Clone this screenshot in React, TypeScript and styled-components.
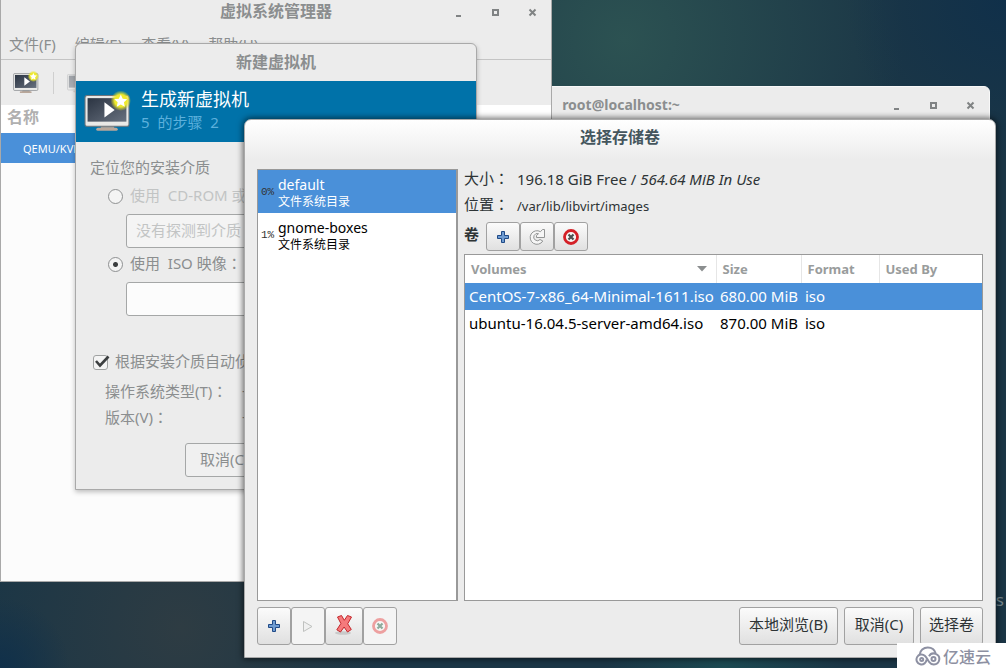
import React from 'react';
import styled, { createGlobalStyle, css } from 'styled-components';

const GlobalStyle = createGlobalStyle`
  * { box-sizing: border-box; }
  body {
    margin: 0;
    font-family: "Noto Sans", "Noto Sans CJK SC", sans-serif;
    font-size: 14px;
    color: #2e3436;
  }
  button, input, select { font: inherit; color: inherit; margin: 0; }
`;

const Desktop = styled.main`
  position: relative;
  min-height: 100vh;
  overflow: hidden;
  background:
    radial-gradient(circle at 0% 100%, #10304a 0, transparent 70px),
    radial-gradient(circle at 100% 0%, #10304a 0, transparent 160px),
    radial-gradient(circle at 62% 6%, #2c5252 0, transparent 280px),
    radial-gradient(circle at 72% 100%, #1c4a52 0, transparent 120px),
    radial-gradient(circle at 18% 94%, #2e3c43 0, transparent 200px),
    #1b3646;
`;

const windowFrame = css`
  position: absolute;
  display: flex;
  flex-direction: column;
  background: #ececec;
  border: 1px solid #a9a9a9;
`;

const ManagerWindow = styled.section`
  ${windowFrame}
  left: 0;
  top: -1px;
  width: 552px;
  height: 583px;
  color: #8b8e8f;
`;

const TerminalWindow = styled.section`
  ${windowFrame}
  left: 252px;
  top: 86px;
  width: 738px;
  height: 480px;
  border-color: #f8f8f8;
  border-radius: 6px 6px 0 0;
  color: #8b8e8f;
`;

const WizardWindow = styled.section`
  ${windowFrame}
  left: 75px;
  top: 43px;
  width: 402px;
  height: 447px;
  border-radius: 6px 6px 0 0;
  box-shadow: 0 2px 5px rgba(0, 0, 0, 0.25);
  color: #8b8e8f;
`;

const DialogWindow = styled.section`
  ${windowFrame}
  left: 244px;
  top: 119px;
  width: 752px;
  height: 539px;
  padding: 0 12px 12px;
  border-radius: 7px 7px 0 0;
  background: linear-gradient(#ffffff 0, #ececec 40px);
  box-shadow: 0 0 6px 1px rgba(0, 0, 0, 0.6);
`;

const TitleBar = styled.header<{ $height: number }>`
  display: grid;
  grid-template-columns: 1fr auto 1fr;
  align-items: center;
  flex: none;
  height: ${(p) => p.$height}px;
`;

const Title = styled.h1<{ $size?: number; $color?: string }>`
  grid-column: 2;
  margin: 0;
  padding-bottom: 2px;
  font-size: ${(p) => p.$size ?? 16}px;
  line-height: 20px;
  font-weight: 700;
  color: ${(p) => p.$color ?? 'inherit'};
`;

const WindowControls = styled.div`
  display: flex;
  justify-content: flex-end;
`;

const WindowControl = styled.button`
  width: 37px;
  height: 20px;
  padding: 0;
  border: 0;
  background: none;
  display: grid;
  place-items: center;
`;

const MenuBar = styled.nav`
  display: flex;
  gap: 19px;
  height: 36px;
  padding: 9px 8px 0;
  border-bottom: 1px solid #c4c4c4;
  font-size: 15px;
  line-height: 22px;
`;

const MenuItem = styled.button`
  height: 22px;
  padding: 0;
  border: 0;
  background: none;
  line-height: 22px;
  white-space: nowrap;
`;

const Toolbar = styled.div`
  display: flex;
  align-items: center;
  height: 45px;
  padding: 0 10px;
`;

const ToolbarButton = styled.button`
  width: 30px;
  height: 30px;
  padding: 0;
  border: 0;
  background: none;
  display: grid;
  place-items: center;
`;

const ToolbarSeparator = styled.span`
  width: 1px;
  height: 22px;
  margin: 0 10px 0 12px;
  background: #cfcfcf;
`;

const MachineTable = styled.table`
  width: 100%;
  border-collapse: collapse;
  background: #fcfcfc;

  th {
    height: 28px;
    padding: 0 6px 5px;
    text-align: left;
    font-size: 16px;
    line-height: 20px;
    color: #b0b0b0;
    background: #fff;
  }
  td {
    height: 30px;
    padding: 0 22px;
    font-size: 11px;
    color: #fff;
    background: #4a90d9;
  }
`;

const MachineArea = styled.div`
  flex: 1;
  background: #fcfcfc;
`;

const Banner = styled.div`
  display: flex;
  align-items: center;
  gap: 10px;
  height: 61px;
  padding: 0 8px;
  background: #0072a9;
`;

const BannerText = styled.div`
  padding-bottom: 6px;
`;

const BannerTitle = styled.h2`
  margin: 0;
  font-size: 18px;
  line-height: 26px;
  font-weight: 400;
  color: #fff;
`;

const BannerStep = styled.p`
  margin: 0;
  font-size: 15px;
  line-height: 20px;
  white-space: pre;
  color: #5cb0dc;
`;

const WizardBody = styled.form`
  flex: 1;
  display: flex;
  flex-direction: column;
  padding: 14px 14px 12px;
  font-size: 15px;
  line-height: 22px;
  white-space: nowrap;
`;

const ChoiceLabel = styled.label<{ $disabled?: boolean }>`
  display: flex;
  align-items: center;
  gap: 7px;
  height: 22px;
  white-space: pre;
  color: ${(p) => (p.$disabled ? '#c2c4c4' : 'inherit')};
`;

const ChoiceText = styled.span`
  padding-bottom: 2px;
`;

const Colon = styled.span`
  font-family: "Noto Sans CJK TC", sans-serif;
`;

const Choices = styled.div`
  display: flex;
  flex-direction: column;
  padding: 7px 0 0 18px;
`;

const Radio = styled.input`
  appearance: none;
  width: 15px;
  height: 15px;
  border: 1px solid #8f9192;
  border-radius: 50%;
  background: #f4f4f4;
  &:checked {
    background: radial-gradient(circle, #3c3f40 0 2px, #f4f4f4 3px);
  }
`;

const Entry = styled.input`
  height: 34px;
  margin: 7px 0 5px 18px;
  padding: 0 9px 2px;
  border: 1px solid #a5a7a7;
  border-radius: 3px;
  background: #fcfcfc;
  &:disabled { background: #f4f4f4; }
  &::placeholder { color: #c2c4c4; opacity: 1; }
`;

const CheckBox = styled.span`
  position: relative;
  display: grid;
  width: 15px;
  height: 15px;
  input {
    appearance: none;
    width: 15px;
    height: 15px;
    border: 1px solid #a0a2a2;
    border-radius: 3px;
    background: #f4f4f4;
  }
  svg { position: absolute; left: 0; top: -1px; }
`;

const DetectOption = styled.div`
  padding: 30px 0 5px 3px;
`;

const OsFields = styled.dl`
  display: grid;
  grid-template-columns: 137px 1fr;
  margin: 0;
  padding-left: 15px;
  line-height: 25px;
  dt, dd { margin: 0; }
`;

const WizardActions = styled.div`
  display: flex;
  gap: 6px;
  margin-top: auto;
  padding-left: 95px;
`;

const WizardButton = styled.button`
  height: 34px;
  flex: 1;
  padding: 0 14px 2px;
  text-align: left;
  border: 1px solid #a5a7a7;
  border-radius: 3px;
  background: #f0f0f0;
`;

const DialogHeading = styled.div`
  height: 49px;
  padding-top: 6px;
`;

const DialogBody = styled.div`
  display: flex;
  gap: 6px;
  flex: 1;
  min-height: 0;
`;

const PoolList = styled.ul`
  flex: none;
  width: 201px;
  margin: 0;
  padding: 0;
  list-style: none;
  background: #fff;
  border: 1px solid #999;
  border-right-width: 2px;
`;

const PoolItem = styled.li<{ $selected?: boolean }>`
  display: flex;
  align-items: center;
  gap: 4px;
  height: 43px;
  padding-left: 3px;
  color: ${(p) => (p.$selected ? '#fff' : '#000')};
  background: ${(p) => (p.$selected ? '#4a90d9' : 'transparent')};
`;

const PoolUsage = styled.span`
  width: 13px;
  font-family: "Liberation Mono", monospace;
  font-size: 11px;
  color: #333;
`;

const PoolName = styled.div`
  padding-top: 2px;
  font-size: 14px;
  line-height: 18px;
`;

const PoolType = styled.div`
  font-size: 12px;
  line-height: 16px;
`;

const VolumePane = styled.div`
  flex: 1;
  display: flex;
  flex-direction: column;
  gap: 3px;
  min-width: 0;
`;

const PoolInfo = styled.dl`
  display: grid;
  grid-template-columns: 53px 1fr;
  row-gap: 2px;
  margin: 0;
  font-size: 15px;
  line-height: 20px;
  dt { line-height: 18px; white-space: nowrap; }
  dd { height: 24px; margin: 0; }
`;

const PoolPath = styled.span`
  font-size: 13px;
`;

const VolumeTools = styled.div`
  display: flex;
  align-items: center;
  height: 29px;
`;

const VolumeLabel = styled.strong`
  width: 22px;
  padding-bottom: 5px;
  font-size: 15px;
  line-height: 20px;
`;

const IconButton = styled.button<{ $width?: number; $height: number }>`
  width: ${(p) => p.$width ?? 34}px;
  height: ${(p) => p.$height}px;
  padding: 0;
  display: grid;
  place-items: center;
  border: 1px solid #a1a1a1;
  border-radius: 3px;
  background: linear-gradient(#fbfbfb, #e0e0e0);
  &:disabled { background: #f4f4f4; }
`;

const TableFrame = styled.div`
  flex: 1;
  background: #fff;
  border: 1px solid #999;
`;

const VolumeTable = styled.table`
  width: 100%;
  table-layout: fixed;
  border-collapse: collapse;
  white-space: nowrap;

  th {
    height: 28px;
    padding: 0 6px;
    text-align: left;
    font-size: 13px;
    color: #999c9c;
    border-right: 1px solid #e6e6e6;
  }
  th:last-child { border-right: 0; }
  td { height: 27px; padding: 0 4px 2px; font-size: 15px; line-height: 20px; }
`;

const VolumeRow = styled.tr<{ $selected?: boolean }>`
  color: ${(p) => (p.$selected ? '#fff' : '#000')};
  background: ${(p) => (p.$selected ? '#4a90d9' : 'transparent')};
`;

const SortHeading = styled.span`
  display: flex;
  align-items: center;
  justify-content: space-between;
  padding-right: 3px;
`;

const DialogFooter = styled.footer`
  display: flex;
  justify-content: space-between;
  padding-top: 6px;
`;

const ButtonGroup = styled.div<{ $gap?: number }>`
  display: flex;
  gap: ${(p) => p.$gap ?? 0}px;
`;

const ActionButton = styled.button<{ $width: number }>`
  width: ${(p) => p.$width}px;
  height: 38px;
  padding: 0 0 5px;
  font-size: 15px;
  white-space: nowrap;
  border: 1px solid #a1a1a1;
  border-radius: 3px;
  background: linear-gradient(#fbfbfb, #e0e0e0);
`;

const DesktopText = styled.span`
  position: absolute;
  right: 2px;
  bottom: 57px;
  font-size: 17px;
  line-height: 22px;
  color: #76868e;
`;

const Watermark = styled.div`
  position: absolute;
  right: 0;
  bottom: 0;
  display: flex;
  align-items: center;
  gap: 2px;
  height: 25px;
  padding: 0 15px 0 18px;
  font-size: 16px;
  font-weight: 500;
  color: #8d90a2;
  background: #fff;
`;

const Controls = () => (
  <WindowControls>
    <WindowControl aria-label="最小化">
      <svg width="9" height="9"><path d="M2 7h5v2H2z" fill="#808384" /></svg>
    </WindowControl>
    <WindowControl aria-label="最大化">
      <svg width="9" height="9"><rect x="2" y="2" width="5" height="5" fill="none" stroke="#808384" strokeWidth="2" /></svg>
    </WindowControl>
    <WindowControl aria-label="关闭">
      <svg width="9" height="9"><path d="M1.5 1.5l6 6M7.5 1.5l-6 6" stroke="#808384" strokeWidth="2" /></svg>
    </WindowControl>
  </WindowControls>
);

const MonitorIcon = ({ width, id, dim }: { width: number; id: string; dim?: boolean }) => (
  <svg width={width} height={(width * 40) / 46} viewBox="0 0 46 40" opacity={dim ? 0.4 : 1}>
    <defs>
      <linearGradient id={`${id}-screen`} x1="0" y1="0" x2="1" y2="1">
        <stop offset="0" stopColor="#2b3442" />
        <stop offset="1" stopColor="#68717f" />
      </linearGradient>
      <radialGradient id={`${id}-glow`}>
        <stop offset="0.6" stopColor="#efea2c" />
        <stop offset="1" stopColor="#e6e61a" stopOpacity="0" />
      </radialGradient>
    </defs>
    <path d="M17 34h12l1 3H16z" fill="#9a9c9b" />
    <rect x="12" y="36" width="21" height="3" rx="1.5" fill="#b9a79a" />
    <rect x="1" y="4.5" width="43" height="30" rx="2" fill="#e9e9e7" stroke="#70747a" />
    <rect x="3.5" y="7" width="38" height="23" fill={`url(#${id}-screen)`} />
    <path d="M20 11v15l10-7.500z" fill="#fff" />
    {!dim && (
      <>
        <circle cx="36" cy="9.500" r="10" fill={`url(#${id}-glow)`} />
        <path d="M36 3.500l1.900 4 4.400.5-3.200 3 .8 4.300-3.900-2.100-3.900 2.100.8-4.300-3.200-3 4.400-.5z" fill="#fff" />
      </>
    )}
  </svg>
);

const PlusIcon = () => (
  <svg width="14" height="14" viewBox="0 0 14 14">
    <path d="M5.500 1.500h3v4h4v3h-4v4h-3v-4h-4v-3h4z" fill="#6f9cd2" stroke="#204a87" strokeLinejoin="round" />
  </svg>
);

const RefreshIcon = () => (
  <svg width="18" height="18" viewBox="0 0 18 18" fill="none">
    <path
      d="M12.500 3.700L14.500 1.500H16.500V9.500H8.500V7.500L10.500 5.700A3.600 3.600 0 1 0 12 11.500L14.800 13A6.800 6.800 0 1 1 12.500 3.700z"
      fill="#f6f6f6" stroke="#939595" strokeLinejoin="round"
    />
  </svg>
);

const StopIcon = ({ faded }: { faded?: boolean }) => (
  <svg width="16" height="16" viewBox="0 0 16 16">
    <circle cx="8" cy="8" r="6.500" fill="#f6f6f4" stroke={faded ? '#eda0a0' : '#d42027'} strokeWidth="2.800" />
    <path d="M5.500 5.500l5 5M10.500 5.500l-5 5" stroke={faded ? '#8eaa9c' : '#4b5052'} strokeWidth="2.200" />
  </svg>
);

const PlayIcon = () => (
  <svg width="12" height="13" viewBox="0 0 12 13">
    <path d="M1.500 1.500v10l8.500-5z" fill="#f0f0f0" stroke="#bfc1bf" strokeLinejoin="round" />
  </svg>
);

const DeleteIcon = () => (
  <svg width="20" height="24" viewBox="0 0 20 24">
    <ellipse cx="9" cy="19" rx="8" ry="1.800" fill="#c9c9c9" />
    <path
      d="M3.500 3L7.500 1.500l2.800 4.800L13.500 1.500l4 1.500-3.800 6.800 3.600 5.700-3.800 2.500-3.400-5-3.600 5-3.700-2.200 4.100-6.300z"
      fill="#f57a7c" stroke="#c4262b" strokeLinejoin="round"
    />
  </svg>
);

const CloudLogo = () => (
  <svg width="26" height="20" viewBox="0 0 26 20" fill="none" stroke="#8d90a2" strokeWidth="2">
    <path d="M4.500 9C5 4.500 8.500 1.500 12.800 1.500c3.800 0 6.900 2.300 7.900 6" />
    <path d="M11.500 13.500a5 5 0 1 1-1.700-3.800c2 1.700 2.800 4.500 4.500 6.500 1 1.400 2.500 2.300 4.500 2.300a5.500 5.500 0 1 0-4.800-8.200" />
    <circle cx="18.500" cy="13" r="2" />
    <circle cx="6.700" cy="13.500" r="1.500" />
  </svg>
);

const pools = [
  { usage: '0%', name: 'default', type: '文件系统目录' },
  { usage: '1%', name: 'gnome-boxes', type: '文件系统目录' },
];

const volumes = [
  { name: 'CentOS-7-x86_64-Minimal-1611.iso', size: '680.00 MiB', format: 'iso' },
  { name: 'ubuntu-16.04.5-server-amd64.iso', size: '870.00 MiB', format: 'iso' },
];

const Manager = () => (
  <ManagerWindow>
    <TitleBar $height={24}>
      <Title>虚拟系统管理器</Title>
      <Controls />
    </TitleBar>
    <MenuBar>
      {['文件(F)', '编辑(E)', '查看(V)', '帮助(H)'].map((item) => (
        <MenuItem key={item}>{item}</MenuItem>
      ))}
    </MenuBar>
    <Toolbar>
      <ToolbarButton aria-label="新建虚拟机"><MonitorIcon id="new" width={26} /></ToolbarButton>
      <ToolbarSeparator />
      <ToolbarButton aria-label="打开" disabled><MonitorIcon id="open" width={24} dim /></ToolbarButton>
    </Toolbar>
    <MachineTable>
      <thead><tr><th scope="col">名称</th></tr></thead>
      <tbody><tr><td>QEMU/KVM</td></tr></tbody>
    </MachineTable>
    <MachineArea />
  </ManagerWindow>
);

const Wizard = () => (
  <WizardWindow>
    <TitleBar $height={37}><Title>新建虚拟机</Title></TitleBar>
    <Banner>
      <MonitorIcon id="banner" width={47} />
      <BannerText>
        <BannerTitle>生成新虚拟机</BannerTitle>
        <BannerStep>{'5  的步骤  2'}</BannerStep>
      </BannerText>
    </Banner>
    <WizardBody onSubmit={(e) => e.preventDefault()}>
      <div>定位您的安装介质</div>
      <Choices>
        <ChoiceLabel $disabled>
          <Radio type="radio" name="media" disabled />
          <ChoiceText>{'使用  CD-ROM 或'}</ChoiceText>
        </ChoiceLabel>
        <Entry aria-label="介质" placeholder="没有探测到介质" disabled />
        <ChoiceLabel>
          <Radio type="radio" name="media" defaultChecked />
          <ChoiceText>{'使用  ISO 映像'}<Colon lang="zh-TW">：</Colon></ChoiceText>
        </ChoiceLabel>
        <Entry aria-label="ISO 映像" />
      </Choices>
      <DetectOption>
        <ChoiceLabel>
          <CheckBox>
            <input type="checkbox" defaultChecked />
            <svg width="17" height="15" viewBox="0 0 17 15">
              <path d="M3 7l4 4.500L15.500 2.500" fill="none" stroke="#3c3f40" strokeWidth="2.600" />
            </svg>
          </CheckBox>
          <ChoiceText>根据安装介质自动侦测操作系统</ChoiceText>
        </ChoiceLabel>
      </DetectOption>
      <OsFields>
        <dt>操作系统类型(T)<Colon lang="zh-TW">：</Colon></dt><dd>-</dd>
        <dt>版本(V)<Colon lang="zh-TW">：</Colon></dt><dd>-</dd>
      </OsFields>
      <WizardActions>
        <WizardButton type="button">取消(C)</WizardButton>
        <WizardButton type="button">后退(B)</WizardButton>
      </WizardActions>
    </WizardBody>
  </WizardWindow>
);

const VolumeDialog = () => (
  <DialogWindow role="dialog" aria-labelledby="volume-title">
    <DialogHeading>
      <TitleBar $height={24}><Title id="volume-title" $color="#45565e">选择存储卷</Title></TitleBar>
    </DialogHeading>
    <DialogBody>
      <PoolList>
        {pools.map((pool, i) => (
          <PoolItem key={pool.name} $selected={i === 0}>
            <PoolUsage>{pool.usage}</PoolUsage>
            <div>
              <PoolName>{pool.name}</PoolName>
              <PoolType>{pool.type}</PoolType>
            </div>
          </PoolItem>
        ))}
      </PoolList>
      <VolumePane>
        <PoolInfo>
          <dt>大小<Colon lang="zh-TW">：</Colon></dt>
          <dd>196.18 GiB Free / <em>564.64 MiB In Use</em></dd>
          <dt>位置<Colon lang="zh-TW">：</Colon></dt>
          <dd><PoolPath>/var/lib/libvirt/images</PoolPath></dd>
        </PoolInfo>
        <VolumeTools>
          <VolumeLabel>卷</VolumeLabel>
          <IconButton $height={29} aria-label="新建卷"><PlusIcon /></IconButton>
          <IconButton $height={29} aria-label="刷新"><RefreshIcon /></IconButton>
          <IconButton $height={29} aria-label="删除卷"><StopIcon /></IconButton>
        </VolumeTools>
        <TableFrame>
          <VolumeTable>
            <colgroup>
              <col style={{ width: 251 }} />
              <col style={{ width: 85 }} />
              <col style={{ width: 78 }} />
              <col />
            </colgroup>
            <thead>
              <tr>
                <th scope="col">
                  <SortHeading>
                    Volumes
                    <svg width="10" height="6"><path d="M0 0h10L5 5.500z" fill="#8b8e8f" /></svg>
                  </SortHeading>
                </th>
                <th scope="col">Size</th>
                <th scope="col">Format</th>
                <th scope="col">Used By</th>
              </tr>
            </thead>
            <tbody>
              {volumes.map((volume, i) => (
                <VolumeRow key={volume.name} $selected={i === 0}>
                  <td>{volume.name}</td>
                  <td>{volume.size}</td>
                  <td>{volume.format}</td>
                  <td />
                </VolumeRow>
              ))}
            </tbody>
          </VolumeTable>
        </TableFrame>
      </VolumePane>
    </DialogBody>
    <DialogFooter>
      <ButtonGroup>
        <IconButton $height={38} aria-label="添加池"><PlusIcon /></IconButton>
        <IconButton $height={38} aria-label="启动池" disabled><PlayIcon /></IconButton>
        <IconButton $height={38} $width={38} aria-label="停止池"><DeleteIcon /></IconButton>
        <IconButton $height={38} aria-label="删除池" disabled><StopIcon faded /></IconButton>
      </ButtonGroup>
      <ButtonGroup $gap={6}>
        <ActionButton $width={99}>本地浏览(B)</ActionButton>
        <ActionButton $width={70}>取消(C)</ActionButton>
        <ActionButton $width={63}>选择卷</ActionButton>
      </ButtonGroup>
    </DialogFooter>
  </DialogWindow>
);

export default function App() {
  return (
    <>
      <GlobalStyle />
      <Desktop lang="zh-CN">
        <DesktopText>s</DesktopText>
        <TerminalWindow>
          <TitleBar $height={37}>
            <Title $size={14}>root@localhost:~</Title>
            <Controls />
          </TitleBar>
        </TerminalWindow>
        <Manager />
        <Wizard />
        <VolumeDialog />
        <Watermark><CloudLogo />亿速云</Watermark>
      </Desktop>
    </>
  );
}
